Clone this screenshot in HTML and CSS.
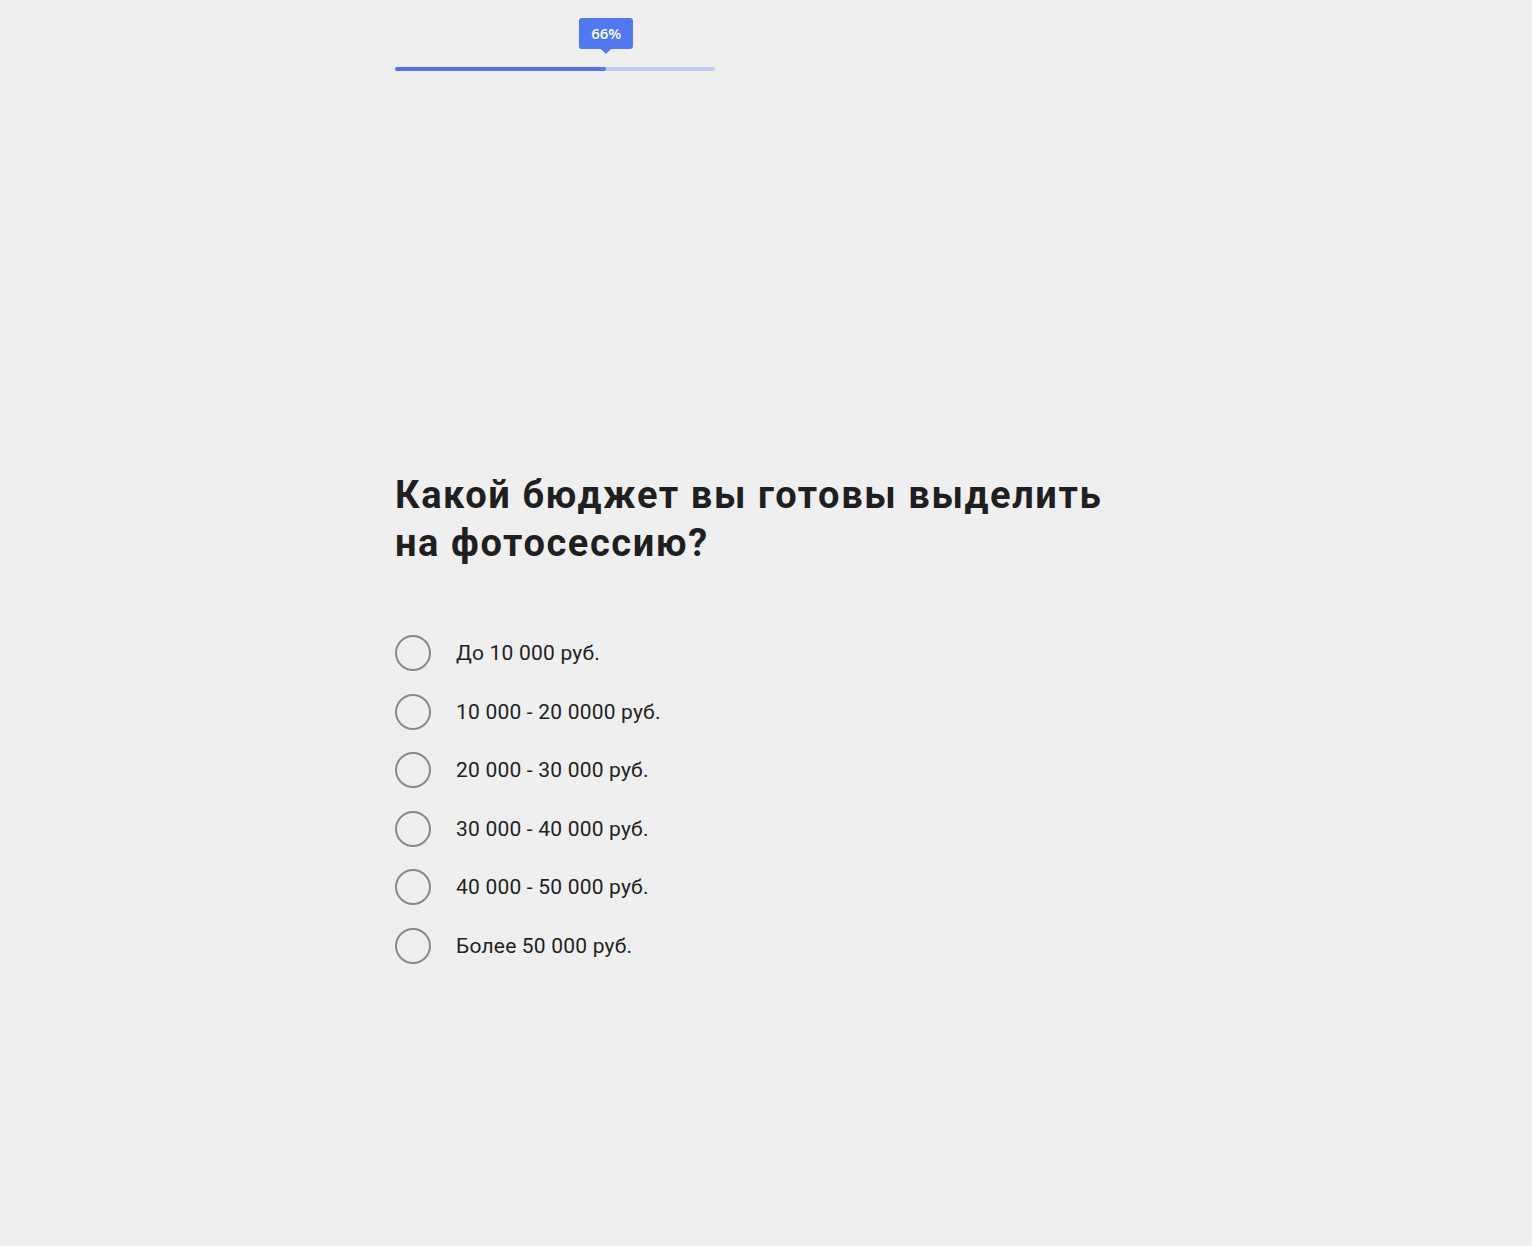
FILE: index.html
```html
<!DOCTYPE html>
<html lang="ru">
<head>
<meta charset="utf-8">
<title>Квиз</title>
<link rel="stylesheet" href="styles.css">
</head>
<body>
<div class="page">
  <div class="progress">
    <div class="progress-track">
      <div class="progress-fill" style="width: 66%"></div>
      <div class="progress-tip" style="left: 66%">66%</div>
    </div>
  </div>
  <div class="question">
    <h1 class="question-title">Какой бюджет вы готовы выделить на фотосессию?</h1>
    <ul class="options">
      <li class="option"><span class="radio"></span><span class="option-label">До 10 000 руб.</span></li>
      <li class="option"><span class="radio"></span><span class="option-label">10 000 - 20 0000 руб.</span></li>
      <li class="option"><span class="radio"></span><span class="option-label">20 000 - 30 000 руб.</span></li>
      <li class="option"><span class="radio"></span><span class="option-label">30 000 - 40 000 руб.</span></li>
      <li class="option"><span class="radio"></span><span class="option-label">40 000 - 50 000 руб.</span></li>
      <li class="option"><span class="radio"></span><span class="option-label">Более 50 000 руб.</span></li>
    </ul>
  </div>
</div>
</body>
</html>
```

FILE: styles.css
```css
html, body {
  margin: 0;
  padding: 0;
  background: #efefef;
}
body {
  font-family: Roboto, "Liberation Sans", sans-serif;
  color: #1f1f1f;
  min-height: 1246px;
}
.page {
  width: 742px;
  margin: 0 auto;
  padding-top: 67px;
}
.progress {
  width: 320px;
}
.progress-track {
  position: relative;
  height: 4px;
  border-radius: 2px;
  background: #c0cbef;
}
.progress-fill {
  height: 100%;
  border-radius: 2px;
  background: #4f77f0;
}
.progress-tip {
  position: absolute;
  bottom: 22px;
  transform: translateX(-50%);
  background: #5078f2;
  color: #fff;
  font-family: "Open Sans", "Noto Sans", sans-serif;
  font-weight: 600;
  font-size: 15px;
  line-height: 31px;
  padding: 0 12px;
  border-radius: 3px;
  white-space: nowrap;
}
.progress-tip::after {
  content: "";
  position: absolute;
  left: 50%;
  top: 100%;
  margin-left: -5px;
  border-left: 5px solid transparent;
  border-right: 5px solid transparent;
  border-top: 5px solid #5078f2;
}
.question {
  padding-top: 400px;
}
.question-title {
  margin: 0;
  font-size: 38px;
  line-height: 48px;
  letter-spacing: 1.6px;
  font-weight: 700;
  color: #1f1f1f;
}
.options {
  list-style: none;
  margin: 68px 0 0;
  padding: 0;
  display: flex;
  flex-direction: column;
  gap: 22.6px;
}
.option {
  display: flex;
  align-items: center;
  gap: 25px;
  height: 36px;
}
.radio {
  box-sizing: border-box;
  width: 36px;
  height: 36px;
  border: 2px solid #8a8a8a;
  border-radius: 50%;
  flex: none;
}
.option-label {
  font-size: 21px;
  letter-spacing: 0.2px;
  color: #222;
}
```
